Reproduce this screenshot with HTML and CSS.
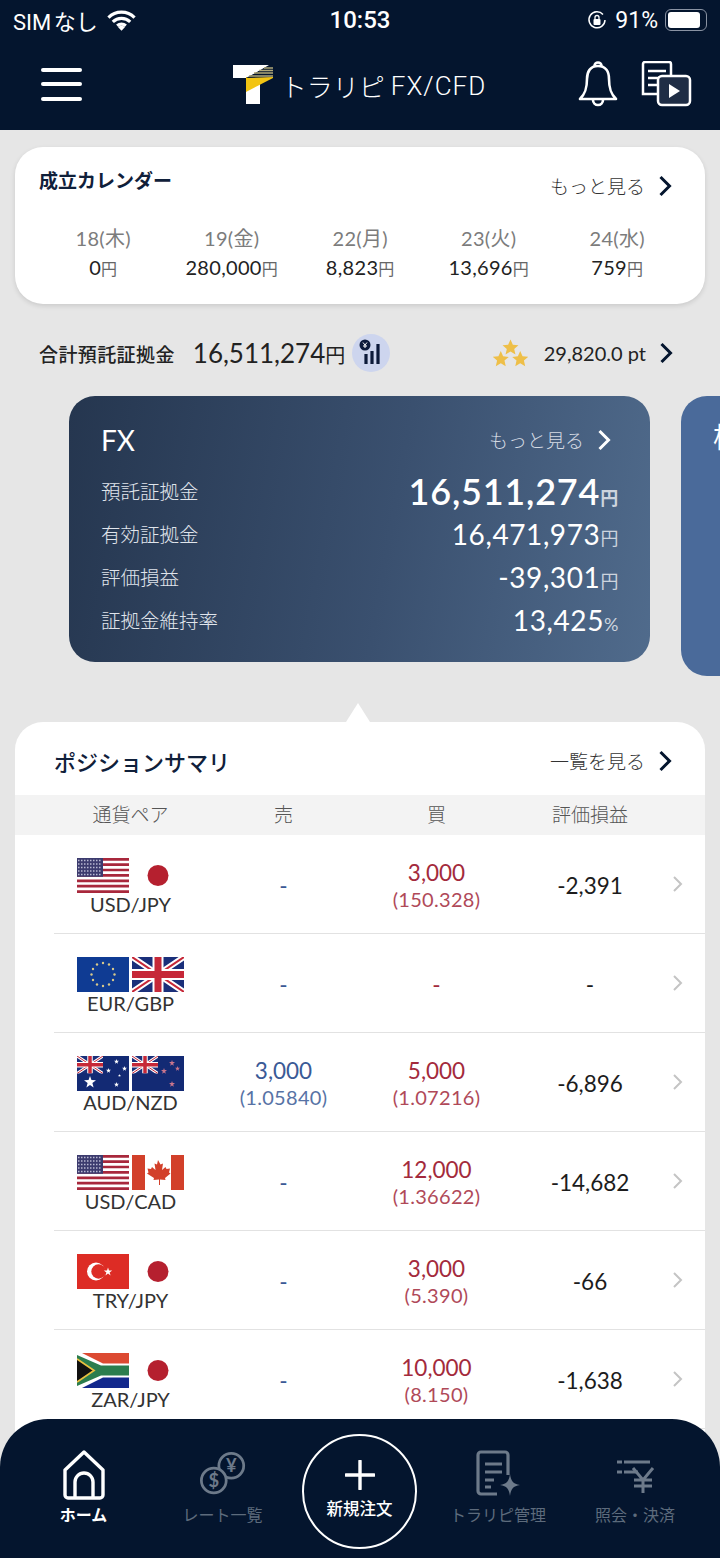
FILE: index.html
```html
<!DOCTYPE html>
<html lang="ja">
<head>
    <title>トラリピ FX/CFD</title>
    <link rel="stylesheet" href="styles.css">
</head>
<body>
    <svg class="defs" width="0" height="0">
        <defs>
            <symbol id="chev" viewBox="0 0 14 22">
                <path d="M2.500 2l9 9-9 9" fill="none" stroke="currentColor" stroke-width="3"/>
            </symbol>
            <symbol id="chev-thin" viewBox="0 0 12 18">
                <path d="M2 2l7 7-7 7" fill="none" stroke="currentColor" stroke-width="2"/>
            </symbol>
            <symbol id="star" viewBox="0 0 10 10">
                <path d="M5 0l1.200 3.400L10 3.500 7 5.800 8 9.500 5 7.400 2 9.500l1-3.700L0 3.500l3.800-.1z"/>
            </symbol>
            <symbol id="us" viewBox="0 0 52 35" preserveAspectRatio="none">
                <rect width="52" height="35" fill="#fff"/>
                <path d="M0 1.300h52M0 6.700h52M0 12h52M0 17.400h52M0 22.800h52M0 28.200h52M0 33.600h52" stroke="#a8283c" stroke-width="2.700"/>
                <rect width="26" height="18.800" fill="#3c3b6e"/>
                <path d="M1 2.500h24M1 6h24M1 9.500h24M1 13h24M1 16.500h24" stroke="#b9b9d2" stroke-width="1.300" stroke-dasharray="1.500 1.500"/>
            </symbol>
            <symbol id="jp" viewBox="0 0 52 35" preserveAspectRatio="none">
                <circle cx="26" cy="17.500" r="10.500" fill="#b5202f"/>
            </symbol>
            <symbol id="eu" viewBox="0 0 52 35" preserveAspectRatio="none">
                <rect width="52" height="35" fill="#0f3b93"/>
                <g fill="#d9c98a">
                    <circle cx="26" cy="6" r="1.200"/><circle cx="32" cy="7.500" r="1.200"/><circle cx="36" cy="12" r="1.200"/><circle cx="37.500" cy="17.500" r="1.200"/><circle cx="36" cy="23" r="1.200"/><circle cx="32" cy="27.500" r="1.200"/>
                    <circle cx="26" cy="29" r="1.200"/><circle cx="20" cy="27.500" r="1.200"/><circle cx="16" cy="23" r="1.200"/><circle cx="14.500" cy="17.500" r="1.200"/><circle cx="16" cy="12" r="1.200"/><circle cx="20" cy="7.500" r="1.200"/>
                </g>
            </symbol>
            <symbol id="gb" viewBox="0 0 52 35" preserveAspectRatio="none">
                <rect width="52" height="35" fill="#1a2f7a"/>
                <path d="M0 0l52 35M52 0L0 35" stroke="#fff" stroke-width="6"/>
                <path d="M0 0l52 35M52 0L0 35" stroke="#c62838" stroke-width="2"/>
                <path d="M26 0v35M0 17.500h52" stroke="#fff" stroke-width="11"/>
                <path d="M26 0v35M0 17.500h52" stroke="#c62838" stroke-width="7"/>
            </symbol>
            <symbol id="au" viewBox="0 0 52 35" preserveAspectRatio="none">
                <rect width="52" height="35" fill="#132a74"/>
                <svg width="26" height="17.500" viewBox="0 0 52 35" preserveAspectRatio="none"><use href="#gb" width="52" height="35"/></svg>
                <g fill="#fff">
                    <use href="#star" x="7" y="20" width="12" height="12"/>
                    <use href="#star" x="37" y="3" width="5" height="5"/>
                    <use href="#star" x="29" y="12" width="5" height="5"/>
                    <use href="#star" x="45" y="10" width="5" height="5"/>
                    <use href="#star" x="41" y="18" width="3" height="3"/>
                    <use href="#star" x="37" y="26" width="5" height="5"/>
                </g>
            </symbol>
            <symbol id="nz" viewBox="0 0 52 35" preserveAspectRatio="none">
                <rect width="52" height="35" fill="#132a74"/>
                <svg width="26" height="17.500" viewBox="0 0 52 35" preserveAspectRatio="none"><use href="#gb" width="52" height="35"/></svg>
                <g fill="#c9758c">
                    <use href="#star" x="37" y="4" width="6" height="6"/>
                    <use href="#star" x="29" y="12" width="6" height="6"/>
                    <use href="#star" x="43" y="10" width="5" height="5"/>
                    <use href="#star" x="37" y="25" width="6" height="6"/>
                </g>
            </symbol>
            <symbol id="ca" viewBox="0 0 52 35" preserveAspectRatio="none">
                <rect width="52" height="35" fill="#fff"/>
                <rect width="13" height="35" fill="#d2402a"/>
                <rect x="39" width="13" height="35" fill="#d2402a"/>
                <path d="M26 5l2.500 4.500 2.500-1-1 6.500 3.500-3 1 2 3.500-.5-1 4 1.500 1-5.500 4.500.5 2-5.500-.5V30h-1v-5.500l-5.500.5.500-2L15 18.500l1.500-1-1-4 3.500.5 1-2 3.500 3-1-6.500 2.500 1z" fill="#d2402a"/>
            </symbol>
            <symbol id="tr" viewBox="0 0 52 35" preserveAspectRatio="none">
                <rect width="52" height="35" fill="#dd2c25"/>
                <circle cx="19" cy="17.500" r="9" fill="#fff"/>
                <circle cx="21.500" cy="17.500" r="7.200" fill="#dd2c25"/>
                <path d="M31 13.500l1 3 3.200 0-2.600 1.900 1 3-2.600-1.900-2.600 1.900 1-3-2.600-1.900 3.200 0z" fill="#fff"/>
            </symbol>
            <symbol id="za" viewBox="0 0 52 35" preserveAspectRatio="none">
                <rect width="52" height="17.500" fill="#dc4a32"/>
                <rect y="17.500" width="52" height="17.500" fill="#12288c"/>
                <path d="M0 0h5l21 10.500h26v14H26L5 35H0z" fill="#fff"/>
                <path d="M0 2l24 10.500h28v10H24L0 33z" fill="#2b7d4e"/>
                <path d="M0 6l17 11.500L0 29" fill="#111" stroke="#e8c040" stroke-width="1.800"/>
            </symbol>
        </defs>
    </svg>

    <div class="app">
        <header class="top">
            <div class="status">
                <div class="status-left">
                    <span>SIM なし</span>
                    <svg class="wifi" viewBox="0 0 30 22"><path d="M1.500 8.500a19 19 0 0 1 27 0M6 13a13 13 0 0 1 18 0M10.500 17a7 7 0 0 1 9 0" fill="none" stroke="#fff" stroke-width="3.300"/><path d="M15 22l-3.500-3.500a5 5 0 0 1 7 0z" fill="#fff"/></svg>
                </div>
                <div class="status-time">10:53</div>
                <div class="status-right">
                    <svg class="lock" viewBox="0 0 20 20"><path d="M16 4.500A8 8 0 1 0 18 10" fill="none" stroke="#fff" stroke-width="1.500"/><rect x="6.500" y="9" width="7" height="6" rx="1" fill="#fff"/><path d="M8 9V7.500a2 2 0 0 1 4 0V9" fill="none" stroke="#fff" stroke-width="1.300"/></svg>
                    <span>91%</span>
                    <div class="battery"><div class="battery-fill"></div></div>
                </div>
            </div>
            <div class="nav">
                <div class="burger"><i></i><i></i><i></i></div>
                <div class="brand">
                    <svg class="brand-t" viewBox="0 0 40 40">
                        <path d="M0 1h36L14 14H0z" fill="#fff"/>
                        <path d="M13 14h14v26H13z" fill="#fff"/>
                        <path d="M13 13h27v1L13 28z" fill="#f2c413"/>
                        <path d="M13 14L40 0v13z" fill="#04152e"/>
                        <path d="M16 12h24M21 9h19M26 6.500h14M31 4h9" stroke="#b0a878" stroke-width="1.600"/>
                    </svg>
                    <span class="brand-jp">トラリピ</span>
                    <span class="brand-en">FX/CFD</span>
                </div>
                <div class="nav-icons">
                    <svg class="bell" viewBox="0 0 42 48"><path d="M21 6c-8 0-11 6-11 13 0 10-2 15-7 20h36c-5-5-7-10-7-20 0-7-3-13-11-13z" fill="none" stroke="#fff" stroke-width="2.600" stroke-linejoin="round"/><path d="M17.500 6a3.500 3.500 0 0 1 7 0M16 40a5 5 0 0 0 10 0" fill="none" stroke="#fff" stroke-width="2.600"/></svg>
                    <svg class="video" viewBox="0 0 52 46"><path d="M18 33H3V3a2 2 0 0 1 2-2h24a2 2 0 0 1 2 2v11" fill="none" stroke="#fff" stroke-width="2.500"/><path d="M8 10h18M8 17h15M8 24h9" stroke="#fff" stroke-width="2.500"/><rect x="18" y="15" width="32" height="29" rx="4" fill="#1f2d45" stroke="#fff" stroke-width="2.500"/><path d="M29 23l11 7-11 7z" fill="#fff"/></svg>
                </div>
            </div>
        </header>

        <section class="calendar">
            <div class="card-head">
                <h2 class="calendar-title">成立カレンダー</h2>
                <div class="more">もっと見る<svg class="chev"><use href="#chev"/></svg></div>
            </div>
            <div class="days">
                <div class="day"><div class="day-date">18(木)</div><div class="day-val">0<small>円</small></div></div>
                <div class="day"><div class="day-date">19(金)</div><div class="day-val">280,000<small>円</small></div></div>
                <div class="day"><div class="day-date">22(月)</div><div class="day-val">8,823<small>円</small></div></div>
                <div class="day"><div class="day-date">23(火)</div><div class="day-val">13,696<small>円</small></div></div>
                <div class="day"><div class="day-date">24(水)</div><div class="day-val">759<small>円</small></div></div>
            </div>
        </section>

        <div class="balance">
            <span class="balance-label">合計預託証拠金</span>
            <span class="balance-val">16,511,274<small>円</small></span>
            <svg class="balance-icon" viewBox="0 0 38 38">
                <circle cx="19" cy="19" r="19" fill="#cdd5ee"/>
                <circle cx="13" cy="11" r="5.500" fill="#0c1a3a"/>
                <path d="M11 8.500l2 2.500 2-2.500M13 11v3M11 12h4" stroke="#fff" stroke-width="1" fill="none"/>
                <path d="M14 20v10M20 17v13M26 10v20" stroke="#0c1a3a" stroke-width="3.200"/>
            </svg>
            <div class="points">
                <svg class="stars" viewBox="0 0 36 30"><g fill="#eebf48"><path d="M18 1l2.400 5.400 5.800.6-4.400 3.800 1.300 5.700-5.100-3-5.100 3 1.300-5.700L9.800 7l5.800-.6z"/><path d="M8 13l2.400 5.400 5.800.6-4.400 3.800 1.300 5.700-5.100-3-5.100 3 1.300-5.700L-.2 19l5.800-.6z"/><path d="M28 13l2.400 5.400 5.800.6-4.400 3.800 1.300 5.700-5.100-3-5.100 3 1.300-5.700L19.800 19l5.800-.6z"/></g></svg>
                <span class="points-val">29,820.0 pt</span>
                <svg class="chev"><use href="#chev"/></svg>
            </div>
        </div>

        <div class="carousel">
            <section class="fx-card">
                <div class="fx-head">
                    <span class="fx-title">FX</span>
                    <div class="more more-light">もっと見る<svg class="chev"><use href="#chev"/></svg></div>
                </div>
                <div class="fx-row fx-row-first"><span class="fx-label">預託証拠金</span><span class="fx-val fx-val-big">16,511,274<small>円</small></span></div>
                <div class="fx-row"><span class="fx-label">有効証拠金</span><span class="fx-val">16,471,973<small>円</small></span></div>
                <div class="fx-row"><span class="fx-label">評価損益</span><span class="fx-val">-39,301<small>円</small></span></div>
                <div class="fx-row"><span class="fx-label">証拠金維持率</span><span class="fx-val">13,425<small>%</small></span></div>
            </section>
            <section class="next-card"><span class="next-title">株</span></section>
        </div>

        <section class="summary">
            <div class="summary-head">
                <h2 class="summary-title">ポジションサマリ</h2>
                <div class="more">一覧を見る<svg class="chev"><use href="#chev"/></svg></div>
            </div>
            <div class="thead">
                <span>通貨ペア</span><span>売</span><span>買</span><span>評価損益</span>
            </div>
            <div class="rows">
                <div class="row">
                    <div class="pair"><div class="flags"><svg class="flag"><use href="#us"/></svg><svg class="flag"><use href="#jp"/></svg></div><div class="pair-name">USD/JPY</div></div>
                    <div class="cell sell">-</div>
                    <div class="cell buy">3,000<small>(150.328)</small></div>
                    <div class="cell pl">-2,391</div>
                    <svg class="row-chev"><use href="#chev-thin"/></svg>
                </div>
                <div class="row">
                    <div class="pair"><div class="flags"><svg class="flag"><use href="#eu"/></svg><svg class="flag"><use href="#gb"/></svg></div><div class="pair-name">EUR/GBP</div></div>
                    <div class="cell sell">-</div>
                    <div class="cell buy">-</div>
                    <div class="cell pl">-</div>
                    <svg class="row-chev"><use href="#chev-thin"/></svg>
                </div>
                <div class="row">
                    <div class="pair"><div class="flags"><svg class="flag"><use href="#au"/></svg><svg class="flag"><use href="#nz"/></svg></div><div class="pair-name">AUD/NZD</div></div>
                    <div class="cell sell">3,000<small>(1.05840)</small></div>
                    <div class="cell buy">5,000<small>(1.07216)</small></div>
                    <div class="cell pl">-6,896</div>
                    <svg class="row-chev"><use href="#chev-thin"/></svg>
                </div>
                <div class="row">
                    <div class="pair"><div class="flags"><svg class="flag"><use href="#us"/></svg><svg class="flag"><use href="#ca"/></svg></div><div class="pair-name">USD/CAD</div></div>
                    <div class="cell sell">-</div>
                    <div class="cell buy">12,000<small>(1.36622)</small></div>
                    <div class="cell pl">-14,682</div>
                    <svg class="row-chev"><use href="#chev-thin"/></svg>
                </div>
                <div class="row">
                    <div class="pair"><div class="flags"><svg class="flag"><use href="#tr"/></svg><svg class="flag"><use href="#jp"/></svg></div><div class="pair-name">TRY/JPY</div></div>
                    <div class="cell sell">-</div>
                    <div class="cell buy">3,000<small>(5.390)</small></div>
                    <div class="cell pl">-66</div>
                    <svg class="row-chev"><use href="#chev-thin"/></svg>
                </div>
                <div class="row">
                    <div class="pair"><div class="flags"><svg class="flag"><use href="#za"/></svg><svg class="flag"><use href="#jp"/></svg></div><div class="pair-name">ZAR/JPY</div></div>
                    <div class="cell sell">-</div>
                    <div class="cell buy">10,000<small>(8.150)</small></div>
                    <div class="cell pl">-1,638</div>
                    <svg class="row-chev"><use href="#chev-thin"/></svg>
                </div>
            </div>
        </section>

        <nav class="tabbar">
            <div class="tab tab-active">
                <svg class="tab-icon" viewBox="0 0 46 50"><path d="M4 20L23 2l19 18v25a3 3 0 0 1-3 3H7a3 3 0 0 1-3-3z" fill="none" stroke="#fff" stroke-width="3.400" stroke-linejoin="round"/><path d="M14 47V32a9 9 0 0 1 18 0v15" fill="none" stroke="#fff" stroke-width="3.400"/></svg>
                <span>ホーム</span>
            </div>
            <div class="tab">
                <svg class="tab-icon" viewBox="0 0 50 50"><g fill="none" stroke="#6d7a8a" stroke-width="3"><circle cx="34" cy="15" r="13.500"/><circle cx="15" cy="31" r="13.500" fill="#04152e"/></g><text x="34" y="22" class="coin">¥</text><text x="15" y="38" class="coin">$</text></svg>
                <span>レート一覧</span>
            </div>
            <div class="tab-new">
                <svg class="plus" viewBox="0 0 30 30"><path d="M15 1v28M1 15h28" stroke="#fff" stroke-width="3.400" stroke-linecap="round"/></svg>
                <span>新規注文</span>
            </div>
            <div class="tab">
                <svg class="tab-icon" viewBox="0 0 46 50"><path d="M22 44H6a3 3 0 0 1-3-3V5a3 3 0 0 1 3-3h24a3 3 0 0 1 3 3v20" fill="none" stroke="#6d7a8a" stroke-width="3.200"/><path d="M10 14h17M10 22h17M10 30h9M10 37h6" stroke="#6d7a8a" stroke-width="3"/><path d="M35 24c1 7 3 10 10 11-7 1-9 4-10 11-1-7-3-10-10-11 7-1 9-4 10-11z" fill="#6d7a8a"/></svg>
                <span>トラリピ管理</span>
            </div>
            <div class="tab">
                <svg class="tab-icon" viewBox="0 0 46 50"><path d="M12 12h26M12 22h14M5 12h5M5 22h5" stroke="#6d7a8a" stroke-width="2.800"/><path d="M21 18l10 12 10-12M31 30v13M22 30h18M22 36h18" fill="none" stroke="#6d7a8a" stroke-width="3"/></svg>
                <span>照会・決済</span>
            </div>
        </nav>
    </div>
</body>
</html>
```

FILE: styles.css
```css
* {
    box-sizing: border-box;
}
html, body {
    margin: 0;
    padding: 0;
}
body {
    font-family: Lato, "Noto Sans CJK JP", sans-serif;
    color: #1c1c1c;
    background: #e6e6e6;
}
h2 {
    margin: 0;
}
small {
    font-size: inherit;
}
.defs {
    position: absolute;
}
.app {
    position: relative;
    width: 720px;
    height: 1558px;
    overflow: hidden;
    background: #e6e6e6;
}

/* header */
.top {
    height: 130px;
    background: #04152e;
    color: #fff;
}
.status {
    display: flex;
    justify-content: space-between;
    align-items: center;
    height: 40px;
    padding: 0 13px;
    font-size: 22px;
    font-family: Roboto, "Noto Sans CJK JP", sans-serif;
}
.status-left, .status-right {
    flex: 1;
    display: flex;
    align-items: center;
}
.status-left {
    gap: 9px;
    word-spacing: -3px;
}
.status-right {
    justify-content: flex-end;
    gap: 5px;
    font-size: 23px;
}
.status-time {
    font-size: 24px;
    font-weight: 500;
}
.wifi {
    width: 29px;
    height: 22px;
}
.lock {
    width: 20px;
    height: 20px;
    margin-right: 3px;
}
.battery {
    width: 42px;
    height: 22px;
    padding: 2px;
    border: 1.500px solid #8a93a3;
    border-radius: 6px;
    margin-left: 2px;
}
.battery-fill {
    width: 90%;
    height: 100%;
    background: #fff;
    border-radius: 3px;
}
.nav {
    display: grid;
    grid-template-columns: 1fr auto 1fr;
    align-items: center;
    height: 90px;
    padding: 0 28px 2px 41px;
}
.burger {
    display: flex;
    flex-direction: column;
    gap: 10.500px;
    width: 41px;
}
.burger i {
    display: block;
    height: 4px;
    border-radius: 2px;
    background: #fff;
}
.brand {
    display: flex;
    align-items: center;
    gap: 8px;
    margin-left: -14px;
}
.brand-t {
    width: 40px;
    height: 40px;
}
.brand-jp {
    font-family: "Noto Sans CJK JP", sans-serif;
    font-size: 26px;
    font-weight: 300;
    margin-top: 3px;
}
.brand-en {
    margin-left: -2px;
    font-family: Roboto, sans-serif;
    font-size: 26px;
    font-weight: 300;
    letter-spacing: 1px;
    margin-top: 3px;
}
.nav-icons {
    display: flex;
    justify-content: flex-end;
    align-items: center;
    gap: 21px;
}
.bell {
    width: 42px;
    height: 48px;
}
.video {
    width: 52px;
    height: 46px;
}

/* calendar */
.calendar {
    height: 157px;
    margin: 17px 15px 0;
    padding: 20px 33px 0 24px;
    background: #fff;
    border-radius: 28px;
    box-shadow: 0 2px 5px rgba(0, 0, 0, .12);
}
.card-head {
    display: flex;
    justify-content: space-between;
    align-items: flex-start;
}
.calendar-title {
    font-family: "Noto Sans CJK JP", sans-serif;
    font-size: 19px;
    font-weight: 700;
    line-height: 26px;
    color: #10203a;
}
.more {
    display: flex;
    align-items: center;
    gap: 13px;
    font-family: "Noto Sans CJK JP", sans-serif;
    font-size: 19px;
    font-weight: 300;
    line-height: 26px;
    color: #333;
}
.chev {
    width: 14px;
    height: 22px;
    color: #04152e;
}
.calendar .more {
    margin-top: 6px;
}
.days {
    display: grid;
    grid-template-columns: repeat(5, 128.500px);
    margin: 26px -17px 0 0;
    text-align: center;
}
.day-date {
    font-size: 20px;
    line-height: 26px;
    letter-spacing: .3px;
    color: #7c7c7c;
}
.day-val {
    margin-top: 3px;
    font-size: 20px;
    line-height: 26px;
    letter-spacing: .3px;
    color: #222;
}
.day-val small {
    font-size: 16px;
    color: #666;
}

/* balance row */
.balance {
    display: flex;
    align-items: center;
    height: 38px;
    margin: 30px 47px 0 39px;
}
.balance-label {
    font-family: "Noto Sans CJK JP", sans-serif;
    font-size: 19px;
    font-weight: 500;
    letter-spacing: .4px;
    color: #222;
}
.balance-val {
    margin-left: 18px;
    font-size: 26px;
    color: #222;
}
.balance-val small {
    font-size: 20px;
}
.balance-icon {
    width: 38px;
    height: 38px;
    margin-left: 7px;
}
.points {
    display: flex;
    align-items: center;
    margin-left: auto;
}
.stars {
    width: 35px;
    height: 30px;
}
.points-val {
    margin: 0 13px 0 16px;
    font-size: 20px;
    color: #222;
}

/* account cards */
.carousel {
    display: flex;
    align-items: flex-start;
    gap: 31px;
    height: 326px;
    margin-top: 24px;
    padding-left: 69px;
}
.fx-card {
    flex: none;
    width: 581px;
    height: 266px;
    padding: 27px 31px 0 32px;
    border-radius: 26px;
    color: #fff;
    background: linear-gradient(100deg, #25364f 0%, #3a506f 55%, #506b8c 100%);
}
.fx-head {
    display: flex;
    justify-content: space-between;
    align-items: center;
    height: 33px;
}
.fx-title {
    font-size: 28px;
}
.more-light {
    color: #d5dbe4;
    margin-right: 8px;
}
.more-light .chev {
    color: #fff;
}
.fx-row {
    display: flex;
    justify-content: space-between;
    align-items: center;
    height: 43px;
}
.fx-row-first {
    margin-top: 13px;
}
.fx-label {
    font-family: "Noto Sans CJK JP", sans-serif;
    font-size: 19.500px;
    font-weight: 300;
    color: #e0e5ec;
}
.fx-val {
    font-size: 28px;
    letter-spacing: .6px;
}
.fx-val small {
    font-size: 18px;
    color: #cdd4de;
}
.fx-val-big {
    font-size: 36px;
    font-weight: 600;
    letter-spacing: .8px;
}
.next-card {
    flex: none;
    width: 100px;
    height: 280px;
    padding: 20px 0 0 32px;
    border-radius: 26px;
    background: #4a6a9a;
    color: #fff;
}
.next-title {
    font-family: "Noto Sans CJK JP", sans-serif;
    font-size: 28px;
}

/* position summary */
.summary {
    position: relative;
    margin: 0 15px;
    height: 836px;
    background: #fff;
    border-radius: 28px 28px 0 0;
}
.summary::before {
    content: "";
    position: absolute;
    left: 331px;
    top: -19px;
    border: 12px solid transparent;
    border-top: 0;
    border-bottom: 19px solid #fff;
}
.summary-head {
    display: flex;
    justify-content: space-between;
    align-items: center;
    height: 73px;
    padding: 4px 33px 0 39px;
}
.summary-title {
    font-family: "Noto Sans CJK JP", sans-serif;
    font-size: 22px;
    font-weight: 500;
    color: #10203a;
}
.thead {
    display: grid;
    grid-template-columns: 153px 153px 153px 154px;
    align-items: center;
    height: 40px;
    padding: 0 0 3px 39px;
    background: #f3f3f3;
    font-family: "Noto Sans CJK JP", sans-serif;
    font-size: 19px;
    font-weight: 300;
    color: #555;
    text-align: center;
}
.rows {
    margin-left: 39px;
}
.row {
    display: grid;
    grid-template-columns: 153px 153px 153px 154px 1fr;
    align-items: center;
    height: 99px;
    border-bottom: 1.500px solid #e2e2e2;
    text-align: center;
}
.pair {
    padding-top: 7px;
}
.flags {
    display: flex;
    justify-content: center;
    gap: 3px;
}
.flag {
    width: 52px;
    height: 35px;
}
.pair-name {
    margin-top: -1px;
    margin-bottom: 1px;
    font-size: 20px;
    line-height: 24px;
    color: #333;
}
.cell {
    padding-top: 4px;
    font-size: 22.500px;
    line-height: 26px;
}
.cell small {
    display: block;
    font-size: 20px;
    line-height: 26px;
    letter-spacing: .3px;
    opacity: .85;
}
.sell {
    color: #3a5a96;
}
.buy {
    color: #a32a3c;
}
.pl {
    color: #1c1c1c;
}
.row-chev {
    width: 12px;
    height: 18px;
    margin-left: 5px;
    color: #c4c4c4;
}

/* bottom tabs */
.tabbar {
    position: absolute;
    left: 0;
    right: 0;
    bottom: 0;
    height: 139px;
    display: grid;
    grid-template-columns: 167px 111px 164px 112px 162px;
    background: #04152e;
    border-radius: 48px 48px 0 0;
}
.tab {
    display: flex;
    flex-direction: column;
    align-items: center;
    padding-top: 31px;
    color: #5d6b7c;
    font-family: "Noto Sans CJK JP", sans-serif;
    font-size: 16px;
    line-height: 24px;
    white-space: nowrap;
}
.tab-active {
    color: #fff;
    font-weight: 700;
}
.tab-icon {
    width: 46px;
    height: 50px;
    margin-bottom: 2px;
}
.coin {
    font-family: Lato, sans-serif;
    font-size: 20px;
    font-weight: 700;
    fill: #6d7a8a;
    text-anchor: middle;
}
.tab-new {
    width: 115px;
    height: 115px;
    margin: 15px 24px 0;
    display: flex;
    flex-direction: column;
    align-items: center;
    padding-top: 24px;
    border: 2px solid #fff;
    border-radius: 50%;
    color: #fff;
    font-family: "Noto Sans CJK JP", sans-serif;
    font-size: 16.500px;
    font-weight: 500;
    white-space: nowrap;
}
.plus {
    width: 30px;
    height: 30px;
    margin-bottom: 6px;
}
```
